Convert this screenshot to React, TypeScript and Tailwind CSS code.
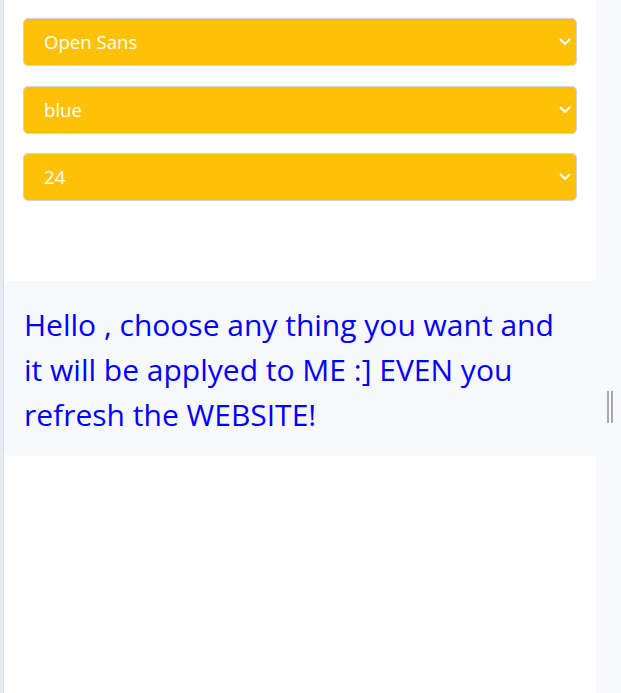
import React from "react";

const Chevron = () => (
  <svg width="12" height="8" viewBox="0 0 12 8" className="shrink-0">
    <path d="M1.5 1.5 L6 6 L10.5 1.5" fill="none" stroke="white" strokeWidth="2" strokeLinecap="round" strokeLinejoin="round" />
  </svg>
);

const Select = ({ label }: { label: string }) => (
  <div className="flex h-[48px] items-center justify-between rounded-[5px] border border-[#ced4da] bg-[#ffc107] pl-5 pr-[5px] text-[18.6px] text-white">
    <span>{label}</span>
    <Chevron />
  </div>
);

export default function App() {
  return (
    <div className="flex h-[693px] w-[621px] overflow-hidden bg-white" style={{ fontFamily: '"Open Sans", sans-serif' }}>
      <div className="w-[3px] shrink-0 bg-[#e6eaf1]" />
      <div className="w-px shrink-0 bg-[#d7dde6]" />
      <div className="flex w-[592px] shrink-0 flex-col">
        <div className="flex flex-col gap-[19.5px] px-[19px] pt-[18px]">
          <Select label="Open Sans" />
          <Select label="blue" />
          <Select label="24" />
        </div>
        <div className="mt-[80px] h-[175px] rounded-l-[5px] bg-[#f7f8fa] pl-[20px] pr-[21px] pt-[21px] text-[30px] leading-[45px] text-[#0000ff]">
          Hello , choose any thing you want and it will be applyed to ME :] EVEN you refresh the WEBSITE!
        </div>
      </div>
      <div className="flex flex-1 items-start justify-center bg-[#f8f9fd] pt-[391px]">
        <div className="flex gap-[2px] pl-[2px]">
          <div className="h-[32px] w-[2px] bg-[#a8a8a8]" />
          <div className="h-[32px] w-[2px] bg-[#a8a8a8]" />
        </div>
      </div>
    </div>
  );
}
